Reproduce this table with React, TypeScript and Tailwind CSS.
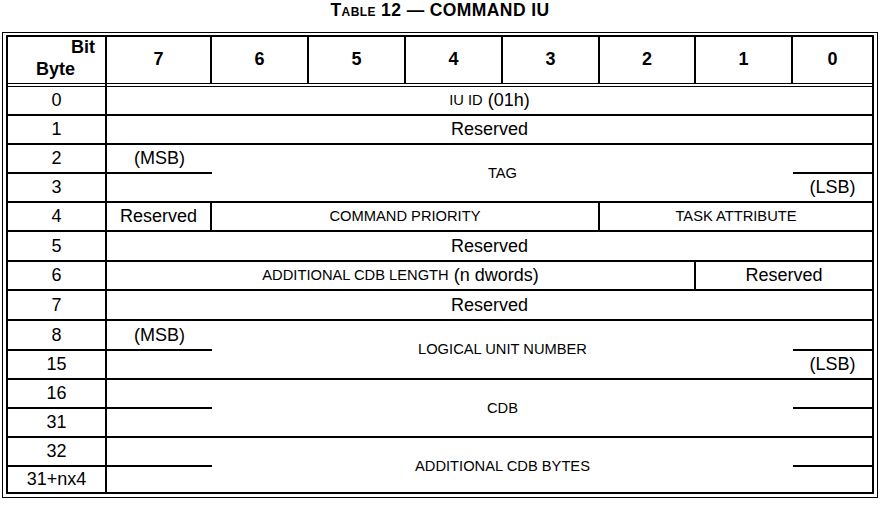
import React from 'react';

const byteCell =
  'col-start-1 flex items-center justify-center border-black border-r-2 border-b-2 text-[18px]';
const cell = 'flex items-center justify-center border-black border-b-2';
const label = 'text-[14.7px]';

function ByteCell({ n, last = false, top = false }: { n: string; last?: boolean; top?: boolean }) {
  return (
    <div
      className={
        last
          ? 'col-start-1 flex items-center justify-center border-black border-r-2 text-[18px]'
          : top
          ? byteCell + ' border-t'
          : byteCell
      }
    >
      {n}
    </div>
  );
}

export default function App() {
  return (
    <div className="w-[888px] h-[506px] bg-white text-black font-['Liberation_Sans',Arial,sans-serif]">
      {/* Caption */}
      <div className="ml-[2px] w-[876px] h-[32px] pt-[1px] text-center text-[17.5px] leading-[18px] tracking-[0.4px] font-bold">
        <span className="[font-variant:small-caps]">Table</span> 12 — COMMAND IU
      </div>

      {/* Outer frame */}
      <div className="ml-[2px] w-[876px] h-[466px] border border-black pt-[2px] pl-[3px] pr-[3px] pb-[3px]">
        <div className="h-full border-2 border-black grid grid-cols-[99px_105px_97px_97px_97px_97px_96px_97px_79px] grid-rows-[47px_2px_30px_29px_29px_29px_29px_30px_29px_30px_30px_29px_29px_29px_29px_25px]">
          {/* Header */}
          <div className="col-start-1 flex flex-col border-black border-r-2 border-b font-bold text-[18px] leading-[21.5px]">
            <span className="text-right pr-[10px]">Bit</span>
            <span className="pl-[28px]">Byte</span>
          </div>
          {['7', '6', '5', '4', '3', '2', '1'].map((b) => (
            <div
              key={b}
              className="flex items-center justify-center pb-[2px] border-black border-r-2 border-b font-bold text-[18px]"
            >
              {b}
            </div>
          ))}
          <div className="flex items-center justify-center pb-[2px] border-black border-b font-bold text-[18px]">
            0
          </div>

          {/* gap between the double rule */}
          <div className="col-start-1 border-black border-r-2" />

          {/* Byte 0 */}
          <ByteCell n="0" top />
          <div className={cell + ' col-span-8 border-t text-[18px]'}>
            <span className={label}>IU ID</span>&nbsp;(01h)
          </div>

          {/* Byte 1 */}
          <ByteCell n="1" />
          <div className={cell + ' col-span-8 text-[18px]'}>Reserved</div>

          {/* Byte 2-3 */}
          <ByteCell n="2" />
          <div className={cell + ' text-[18px]'}>(MSB)</div>
          <div className={cell + ' col-span-6 row-span-2 ' + label}>TAG</div>
          <div className={cell} />
          <ByteCell n="3" />
          <div className={cell} />
          <div className={cell + ' text-[18px]'}>(LSB)</div>

          {/* Byte 4 */}
          <ByteCell n="4" />
          <div className={cell + ' border-r-2 text-[18px]'}>Reserved</div>
          <div className={cell + ' col-span-4 border-r-2 ' + label}>COMMAND PRIORITY</div>
          <div className={cell + ' col-span-3 ' + label}>TASK ATTRIBUTE</div>

          {/* Byte 5 */}
          <ByteCell n="5" />
          <div className={cell + ' col-span-8 text-[18px]'}>Reserved</div>

          {/* Byte 6 */}
          <ByteCell n="6" />
          <div className={cell + ' col-span-6 border-r-2 text-[18px]'}>
            <span className={label}>ADDITIONAL CDB LENGTH</span>&nbsp;(n dwords)
          </div>
          <div className={cell + ' col-span-2 text-[18px]'}>Reserved</div>

          {/* Byte 7 */}
          <ByteCell n="7" />
          <div className={cell + ' col-span-8 text-[18px]'}>Reserved</div>

          {/* Byte 8-15 */}
          <ByteCell n="8" />
          <div className={cell + ' text-[18px]'}>(MSB)</div>
          <div className={cell + ' col-span-6 row-span-2 ' + label}>LOGICAL UNIT NUMBER</div>
          <div className={cell} />
          <ByteCell n="15" />
          <div className={cell} />
          <div className={cell + ' text-[18px]'}>(LSB)</div>

          {/* Byte 16-31 */}
          <ByteCell n="16" />
          <div className={cell} />
          <div className={cell + ' col-span-6 row-span-2 ' + label}>CDB</div>
          <div className={cell} />
          <ByteCell n="31" />
          <div className={cell} />
          <div className={cell} />

          {/* Byte 32 .. 31+nx4 */}
          <ByteCell n="32" />
          <div className={cell} />
          <div className={'flex items-center justify-center col-span-6 row-span-2 pt-[3px] ' + label}>
            ADDITIONAL CDB BYTES
          </div>
          <div className={cell} />
          <ByteCell n="31+nx4" last />
          <div />
          <div />
        </div>
      </div>
    </div>
  );
}
